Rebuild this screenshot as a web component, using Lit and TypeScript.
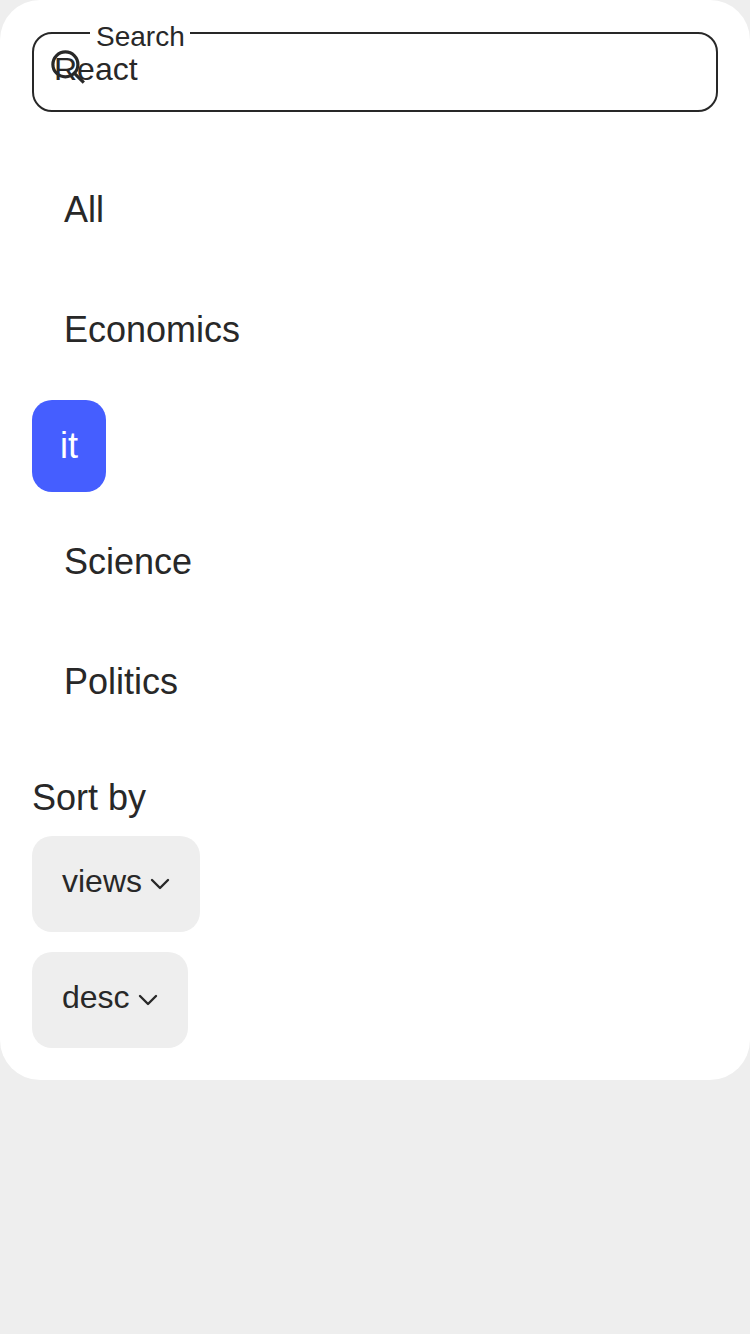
import { LitElement, html, css } from "lit";
import { customElement, state } from "lit/decorators.js";

@customElement("app-root")
export class AppRoot extends LitElement {
  @state() private active = "it";

  static styles = css`
    :host {
      display: block;
      box-sizing: border-box;
      min-height: 1334px;
      background: #eeeeee;
      color: #282828;
      font-family: "Liberation Sans", Arial, sans-serif;
    }
    .panel {
      display: flex;
      flex-direction: column;
      box-sizing: border-box;
      height: 1080px;
      padding: 32px;
      border-radius: 40px;
      background: #fff;
    }
    .search {
      position: relative;
      box-sizing: border-box;
      height: 80px;
      padding: 17px 20px;
      border: 2px solid #282828;
      border-radius: 20px;
      font-size: 32px;
      line-height: 36px;
    }
    .label {
      position: absolute;
      top: -13px;
      left: 56px;
      padding: 0 6px;
      width: 88px;
      background: #fff;
      font-size: 28px;
      line-height: 32px;
      white-space: nowrap;
    }
    .glass {
      position: absolute;
      left: 16px;
      top: 15px;
    }
    .tabs {
      display: flex;
      flex-direction: column;
      align-items: flex-start;
      gap: 20px;
      margin-top: 48px;
      font-size: 36px;
    }
    .tab {
      box-sizing: border-box;
      height: 100px;
      padding: 0 32px;
      line-height: 100px;
      cursor: pointer;
    }
    .tab.active {
      height: 92px;
      padding: 0 28px;
      border-radius: 20px;
      background: #455eff;
      color: #fff;
      line-height: 92px;
    }
    .sort {
      margin: 44px 0 16px;
      font-size: 36px;
      line-height: 44px;
    }
    .selects {
      display: flex;
      flex-direction: column;
      align-items: flex-start;
      gap: 20px;
    }
    .select {
      display: flex;
      align-items: center;
      gap: 8px;
      box-sizing: border-box;
      height: 96px;
      padding: 0 30px;
      border-radius: 20px;
      background: #eeeeee;
      font-size: 32px;
      line-height: 36px;
    }
    .value {
      padding-bottom: 6px;
    }
  `;

  private select(value: string) {
    return html`<div class="select">
      <span class="value">${value}</span>
      <svg width="20" height="12" viewBox="0 0 20 12" fill="none">
        <path d="M2 2L10 10L18 2" stroke="#282828" stroke-width="2.4" stroke-linecap="round" stroke-linejoin="round" />
      </svg>
    </div>`;
  }

  render() {
    return html`<main class="panel">
      <div class="search">
        <span class="label">Search</span>
        <svg class="glass" width="36" height="36" viewBox="0 0 36 36" fill="none" stroke="#282828" stroke-width="3.2">
          <circle cx="15.4" cy="15.4" r="12.5" />
          <path d="M23.5 23.3L33.8 33.6" />
        </svg>
        <span>React</span>
      </div>
      <nav class="tabs">
        ${["All", "Economics", "it", "Science", "Politics"].map(
          (t) => html`<div class="tab ${t === this.active ? "active" : ""}" @click=${() => (this.active = t)}>${t}</div>`
        )}
      </nav>
      <div class="sort">Sort by</div>
      <div class="selects">${this.select("views")}${this.select("desc")}</div>
    </main>`;
  }
}
